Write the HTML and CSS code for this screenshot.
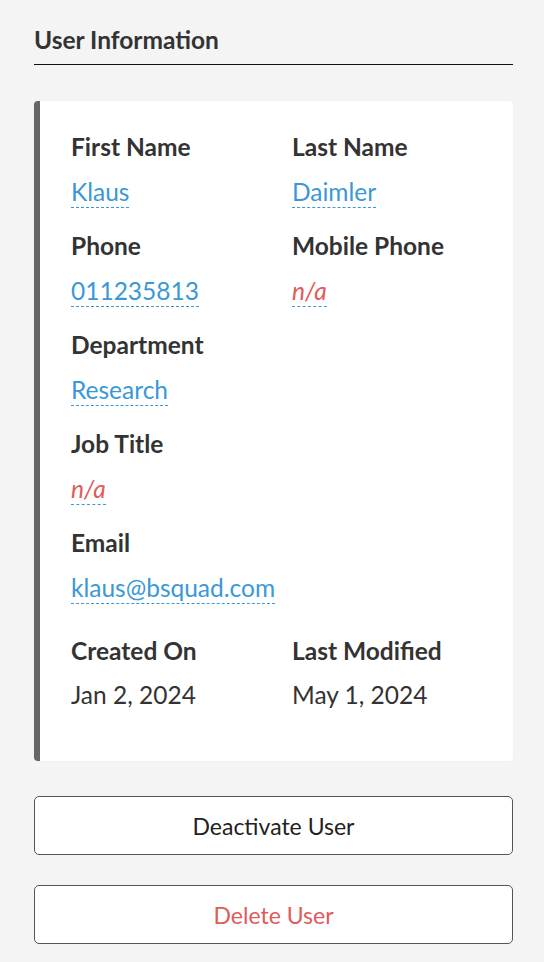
FILE: index.html
```html
<!DOCTYPE html>
<html lang="en">
<head>
    <meta charset="UTF-8">
    <meta name="viewport" content="width=device-width, initial-scale=1.0">
    <title>User Information</title>
    <link rel="stylesheet" href="styles.css">
</head>
<body>
<div class="page">

    <h2 class="section-title">User Information</h2>

    <div class="info-card">
        <div class="field">
            <div class="label">First Name</div>
            <span class="value">Klaus</span>
        </div>
        <div class="field">
            <div class="label">Last Name</div>
            <span class="value">Daimler</span>
        </div>

        <div class="field">
            <div class="label">Phone</div>
            <span class="value">011235813</span>
        </div>
        <div class="field">
            <div class="label">Mobile Phone</div>
            <span class="value empty">n/a</span>
        </div>

        <div class="field full">
            <div class="label">Department</div>
            <span class="value">Research</span>
        </div>

        <div class="field full">
            <div class="label">Job Title</div>
            <span class="value empty">n/a</span>
        </div>

        <div class="field full">
            <div class="label">Email</div>
            <span class="value">klaus@bsquad.com</span>
        </div>

        <div class="field meta">
            <div class="label">Created On</div>
            <span class="plain">Jan 2, 2024</span>
        </div>
        <div class="field meta">
            <div class="label">Last Modified</div>
            <span class="plain">May 1, 2024</span>
        </div>
    </div>

    <button class="action-btn">Deactivate User</button>
    <button class="action-btn danger">Delete User</button>

</div>
</body>
</html>
```

FILE: styles.css
```css
body {
    margin: 0;
    padding: 0;
    font-family: Lato, "Liberation Sans", sans-serif;
    background: #f4f4f4;
    color: #333;
}

.page {
    display: flex;
    flex-direction: column;
    padding: 25px 31px 20px 34px;
}

.section-title {
    margin: 0;
    padding: 0 0 9px;
    font-size: 24.5px;
    line-height: 30px;
    font-weight: bold;
    color: #333;
    border-bottom: 1px solid #111;
}

.info-card {
    display: grid;
    grid-template-columns: 190px 1fr;
    column-gap: 31px;
    margin-top: 36px;
    padding: 31px 31px 51px;
    background: #fff;
    border-left: 6px solid #666;
    border-radius: 4px;
    box-shadow: 0 0 2px rgba(0, 0, 0, 0.06);
}

.field {
    display: flex;
    flex-direction: column;
    align-items: flex-start;
    height: 99px;
}

.field.full {
    grid-column: 1 / -1;
}

.field.meta {
    margin-top: 9px;
    height: auto;
}

.label {
    font-size: 24.5px;
    font-weight: bold;
    color: #333;
    line-height: 30px;
}

.value {
    margin-top: 14px;
    font-size: 24.5px;
    line-height: 31px;
    color: #3a98d8;
    border-bottom: 1px dashed #3a98d8;
}

.value.empty {
    color: #e05b5b;
    font-style: italic;
}

.plain {
    margin-top: 14px;
    font-size: 24.5px;
    line-height: 30px;
    color: #333;
}

.action-btn {
    display: block;
    width: 100%;
    height: 59px;
    margin-top: 35px;
    background: #fff;
    border: 1px solid #555;
    border-radius: 5px;
    font-family: inherit;
    font-size: 23px;
    color: #222;
    cursor: pointer;
}

.action-btn.danger {
    margin-top: 30px;
    color: #e05b5b;
}
```
